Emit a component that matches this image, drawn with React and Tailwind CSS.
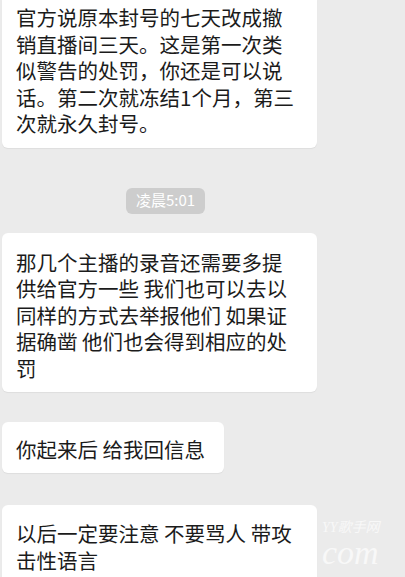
import React from "react";

const messages = [
  {
    id: 1,
    text: "官方说原本封号的七天改成撤销直播间三天。这是第一次类似警告的处罚，你还是可以说话。第二次就冻结1个月，第三次就永久封号。",
  },
  { id: 2, time: "凌晨5:01" },
  {
    id: 3,
    text: "那几个主播的录音还需要多提供给官方一些 我们也可以去以同样的方式去举报他们 如果证据确凿 他们也会得到相应的处罚",
  },
  { id: 4, text: "你起来后 给我回信息" },
  { id: 5, text: "以后一定要注意 不要骂人 带攻击性语言" },
];

function Bubble({ text, pad, round }) {
  return (
    <div
      className={`ml-[2px] max-w-[315px] w-fit bg-white text-[20.5px] leading-[26.5px] text-[#1b1b1b] pl-[14px] pr-[19px] shadow-[0_1px_1px_rgba(0,0,0,0.06)] ${pad} ${round}`}
    >
      {text}
    </div>
  );
}

export default function App() {
  return (
    <div
      className="relative w-[405px] h-[577px] overflow-hidden bg-[#ebebeb]"
      style={{ fontFamily: '"Noto Sans CJK SC", "Noto Sans", sans-serif' }}
    >
      <div className="flex flex-col">
        <Bubble text={messages[0].text} pad="pt-[4px] pb-[11px]" round="rounded-b-md" />
        <div className="mt-[40px] mb-[19px] self-start ml-[126px] h-[26px] w-[79px] rounded-md bg-[#cdcdcd] text-white text-[15px] flex items-center justify-center">
          {messages[1].time}
        </div>
        <Bubble text={messages[2].text} pad="pt-[16px] pb-[11px]" round="rounded-md" />
        <div className="h-[30px]" />
        <Bubble text={messages[3].text} pad="pt-[14px] pb-[10.5px]" round="rounded-md" />
        <div className="h-[32px]" />
        <Bubble text={messages[4].text} pad="pt-[15px] pb-[20px]" round="rounded-t-md" />
      </div>

      {/* watermark */}
      <div className="absolute left-[322px] top-[520px] flex flex-col items-start gap-[1px] text-[#f8f8f8] italic pointer-events-none">
        <span className="text-[14px] leading-[15px]" style={{ fontFamily: '"Liberation Serif", "Noto Sans CJK SC", serif' }}>
          YY歌手网
        </span>
        <span className="text-[34px] leading-[34px]" style={{ fontFamily: '"Liberation Serif", serif' }}>
          com
        </span>
      </div>
    </div>
  );
}
